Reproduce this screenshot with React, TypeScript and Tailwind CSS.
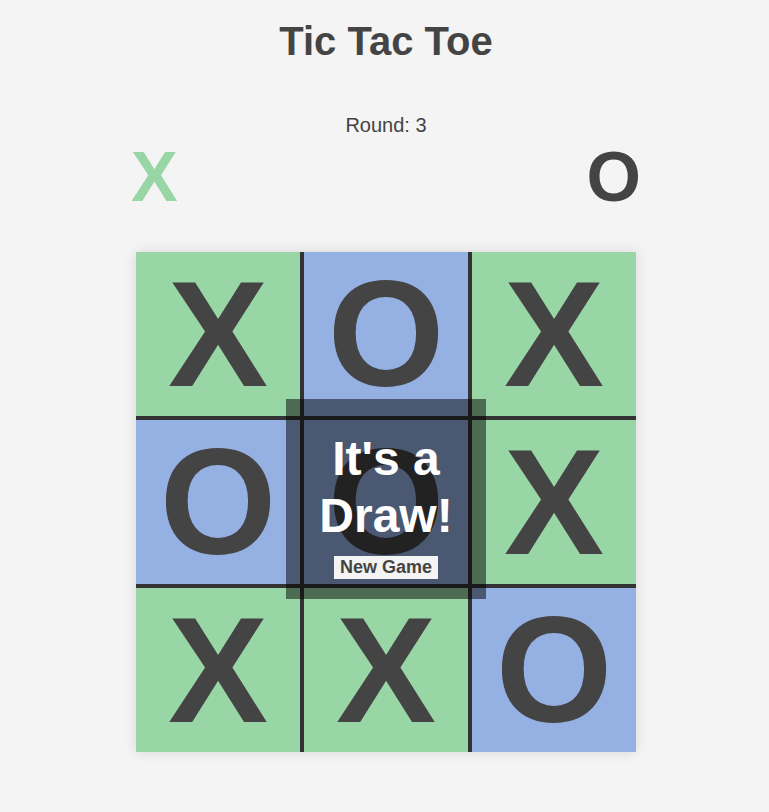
const board = ["X", "O", "X", "O", "O", "X", "X", "X", "O"];

export default function App() {
  return (
    <div className="min-h-screen bg-[#f4f4f4] text-[#444] font-['Liberation_Sans',Arial,sans-serif] flex flex-col items-center pl-[3px]">
      <h1 className="mt-[18px] text-[40px] leading-[46px] font-bold">Tic Tac Toe</h1>

      <p className="mt-[50px] text-[20px] leading-[23px]">Round: 3</p>

      {/* whose turn */}
      <div className="w-[510px] flex justify-between text-[70px] leading-[80px] font-bold">
        <span className="text-[#98d6a5]">X</span>
        <span className="text-[#444]">O</span>
      </div>

      <div className="relative mt-[35px] w-[500px] h-[500px] bg-[#333] grid grid-cols-3 gap-[4px] shadow-[0_0_12px_rgba(0,0,0,0.12)]">
        {board.map((v, i) => (
          <div
            key={i}
            className={
              "flex items-center justify-center text-[150px] leading-none font-bold " +
              (v === "X" ? "bg-[#98d6a5]" : "bg-[#95b1e3]")
            }
          >
            {v}
          </div>
        ))}

        {/* result overlay */}
        <div className="absolute left-[150px] top-[147px] w-[200px] h-[200px] bg-black/50 flex flex-col items-center justify-center pt-[10px]">
          <h2 className="text-white text-[48px] leading-[57px] font-bold text-center">
            It's a
            <br />
            Draw!
          </h2>
          <button className="mt-[12px] bg-[#f4f4f4] text-[#444] text-[18px] leading-[21px] font-bold px-[6px] py-[1px]">
            New Game
          </button>
        </div>
      </div>
    </div>
  );
}
